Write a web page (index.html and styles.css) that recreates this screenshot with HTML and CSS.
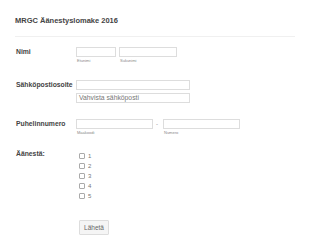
FILE: index.html
```html
<!DOCTYPE html>
<html>
<head>
<meta charset="utf-8">
<link rel="stylesheet" href="styles.css">
</head>
<body>
<div class="form">
  <div class="header"><h1 class="title">MRGC Äänestyslomake 2016</h1></div>
  <div class="row row-name">
    <div class="label">Nimi</div>
    <div class="fields">
      <div class="sub">
        <div class="input w40"></div>
        <div class="sublabel">Etunimi</div>
      </div>
      <div class="sub">
        <div class="input w58"></div>
        <div class="sublabel">Sukunimi</div>
      </div>
    </div>
  </div>
  <div class="row row-email">
    <div class="label">Sähköpostiosoite</div>
    <div class="stack">
      <div class="input w114"></div>
      <div class="input w114"><span class="placeholder">Vahvista sähköposti</span></div>
    </div>
  </div>
  <div class="row row-phone">
    <div class="label">Puhelinnumero</div>
    <div class="fields">
      <div class="sub">
        <div class="input w77"></div>
        <div class="sublabel">Maakoodi</div>
      </div>
      <div class="dash">-</div>
      <div class="sub">
        <div class="input w77"></div>
        <div class="sublabel">Numero</div>
      </div>
    </div>
  </div>
  <div class="row row-vote">
    <div class="label">Äänestä:</div>
    <div class="checks">
      <div class="check"><span class="box"></span><span class="num">1</span></div>
      <div class="check"><span class="box"></span><span class="num">2</span></div>
      <div class="check"><span class="box"></span><span class="num">3</span></div>
      <div class="check"><span class="box"></span><span class="num">4</span></div>
      <div class="check"><span class="box"></span><span class="num">5</span></div>
    </div>
  </div>
  <div class="actions">
    <div class="button">Lähetä</div>
  </div>
</div>
</body>
</html>
```
FILE: styles.css
```css
html, body {
  margin: 0;
  padding: 0;
  background: #fff;
}
body {
  font-family: "Liberation Sans", Arial, sans-serif;
  color: #555;
}
.form {
  padding: 0 15px;
}
.header {
  padding-top: 16px;
  padding-bottom: 11px;
  border-bottom: 1px solid #f0f0f0;
}
.title {
  margin: 0;
  font-size: 7.5px;
  line-height: 9px;
  font-weight: bold;
  color: #444;
}
.row {
  display: flex;
  align-items: flex-start;
}
.label {
  width: 60px;
  padding-left: 1px;
  font-size: 6.8px;
  line-height: 8px;
  font-weight: bold;
  color: #444;
  padding-top: 1px;
}
.fields {
  display: flex;
  align-items: flex-start;
}
.sub {
  display: flex;
  flex-direction: column;
  margin-right: 3px;
}
.input {
  box-sizing: border-box;
  height: 10px;
  border: 1px solid #ddd;
  background: #fff;
}
.w40 { width: 40px; }
.w58 { width: 58px; }
.w114 { width: 114px; }
.w77 { width: 77px; }
.sublabel {
  font-size: 4px;
  line-height: 5px;
  margin-top: 1px;
  padding-left: 1px;
  color: #888;
}
.row-name { margin-top: 10px; }
.row-email { margin-top: 17px; }
.row-phone { margin-top: 16px; }
.row-vote { margin-top: 14px; }
.stack {
  display: flex;
  flex-direction: column;
  gap: 3px;
}
.placeholder {
  display: block;
  font-size: 6.8px;
  line-height: 8px;
  padding-left: 2px;
  color: #777;
}
.dash {
  font-size: 6px;
  line-height: 10px;
  width: 4px;
  margin-right: 3px;
  color: #888;
}
.checks {
  display: flex;
  flex-direction: column;
  padding-left: 3px;
  padding-top: 2px;
}
.check {
  display: flex;
  align-items: center;
  height: 10px;
}
.box {
  box-sizing: border-box;
  width: 6px;
  height: 6px;
  border: 1px solid #aaa;
  border-radius: 1px;
  margin-right: 3px;
}
.num {
  font-size: 6px;
  color: #777;
}
.actions {
  padding-left: 64px;
  margin-top: 19px;
}
.button {
  box-sizing: border-box;
  width: 30px;
  height: 15px;
  border: 1px solid #ddd;
  background: #f5f5f5;
  font-size: 6.5px;
  line-height: 13px;
  text-align: center;
  color: #666;
  border-radius: 1px;
}
```
